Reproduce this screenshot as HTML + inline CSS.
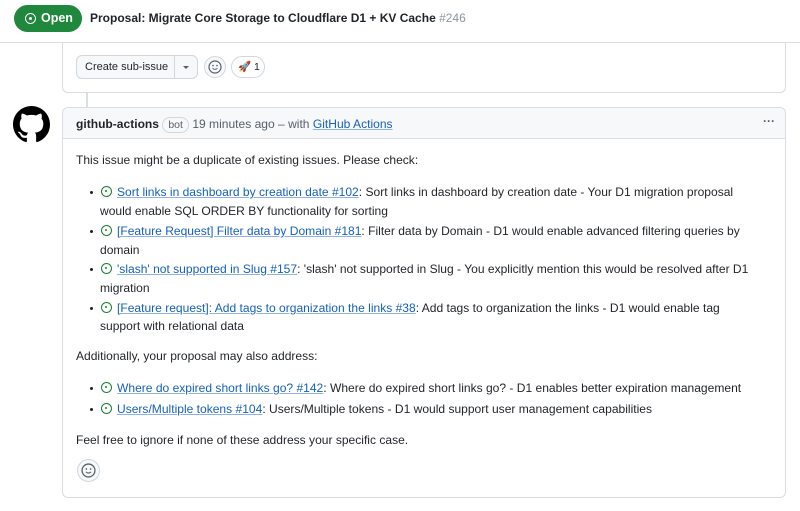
<!DOCTYPE html>
<html><head><meta charset="utf-8"><style>
*{margin:0;padding:0;box-sizing:border-box}
body{width:800px;height:511px;background:#fff;font-family:"Liberation Sans",sans-serif;color:#1f2328;position:relative;overflow:hidden;font-size:12.05px}
.a{position:absolute;white-space:nowrap}
a{color:#1760b8;text-decoration:underline;text-decoration-color:#8cb4e6}
.ic{display:inline-block;width:11px;height:11px;border:1.3px solid #1a7f37;border-radius:50%;position:relative;vertical-align:-1px;margin-right:5px}
.ic:after{content:"";position:absolute;left:2.9px;top:2.9px;width:2.6px;height:2.6px;background:#1a7f37;border-radius:50%}
.b{position:absolute;left:90px;width:3px;height:3px;background:#1f2328;border-radius:50%}
</style></head><body>
<div class="a" style="left:0;top:0;width:800px;height:43px;border-bottom:1px solid #d8dee4"></div>
<div class="a" style="left:14px;top:5px;width:68px;height:27px;background:#1f883d;border-radius:14px;color:#fff;font-weight:bold;font-size:12.5px;line-height:27px;padding-left:27px">Open</div>
<div class="a" style="left:25px;top:13px;width:11px;height:11px;border:1.3px solid #fff;border-radius:50%"></div>
<div class="a" style="left:29px;top:17px;width:3px;height:3px;background:#fff;border-radius:50%"></div>
<div class="a" style="left:90px;top:10px;font-size:12px;font-weight:bold;line-height:16px">Proposal: Migrate Core Storage to Cloudflare D1 + KV Cache <span style="color:#8c959f;font-weight:normal">#246</span></div>

<div class="a" style="left:62px;top:42px;width:724px;height:51px;border:1px solid #d8dee4;border-top:none;border-radius:0 0 6px 6px"></div>
<div class="a" style="left:76px;top:55px;width:122px;height:24px;border:1px solid #d0d7de;border-radius:6px;background:#f6f8fa;font-size:11px;line-height:22px;padding-left:8px">Create sub-issue</div>
<div class="a" style="left:174px;top:55px;width:1px;height:24px;background:#d0d7de"></div>
<div class="a" style="left:183px;top:66px;border-left:3px solid transparent;border-right:3px solid transparent;border-top:3px solid #57606a"></div>
<div class="a" style="left:204px;top:56px;width:22px;height:22px;border:1px solid #d0d7de;border-radius:50%;background:#f6f8fa"></div>
<svg class="a" style="left:208px;top:60px" width="14" height="14" viewBox="0 0 14 14"><circle cx="7" cy="7" r="6" fill="none" stroke="#57606a" stroke-width="1.2"/><circle cx="5" cy="5.6" r=".8" fill="#57606a"/><circle cx="9" cy="5.6" r=".8" fill="#57606a"/><path d="M4.5 8.3q2.5 2.2 5 0" fill="none" stroke="#57606a" stroke-width="1"/></svg>
<div class="a" style="left:231px;top:56px;width:34px;height:22px;border:1px solid #d0d7de;border-radius:11px;font-size:10.5px;line-height:20px;padding-left:6px">🚀 1</div>
<div class="a" style="left:86px;top:93px;width:2px;height:14px;background:#d8dee4"></div>

<svg class="a" style="left:13px;top:106px" width="37" height="37" viewBox="0 0 16 16"><path fill="#000" d="M8 0C3.58 0 0 3.58 0 8c0 3.54 2.29 6.53 5.47 7.59.4.07.55-.17.55-.38 0-.19-.01-.82-.01-1.49-2.01.37-2.53-.49-2.69-.94-.09-.23-.48-.94-.82-1.13-.28-.15-.68-.52-.01-.53.63-.01 1.08.58 1.23.82.72 1.21 1.87.87 2.33.66.07-.52.28-.87.51-1.07-1.78-.2-3.64-.89-3.64-3.95 0-.87.31-1.59.82-2.15-.08-.2-.36-1.02.08-2.12 0 0 .67-.21 2.2.82.64-.18 1.32-.27 2-.27.68 0 1.36.09 2 .27 1.53-1.04 2.2-.82 2.2-.82.44 1.1.16 1.92.08 2.12.51.56.82 1.27.82 2.15 0 3.07-1.87 3.75-3.65 3.95.29.25.54.73.54 1.48 0 1.07-.01 1.93-.01 2.2 0 .21.15.46.55.38A8.013 8.013 0 0016 8c0-4.42-3.58-8-8-8z"/></svg>

<div class="a" style="left:62px;top:107px;width:724px;height:391px;border:1px solid #d8dee4;border-radius:6px"></div>
<div class="a" style="left:63px;top:108px;width:722px;height:31px;background:#f6f8fa;border-bottom:1px solid #d8dee4;border-radius:6px 6px 0 0"></div>
<div class="a" style="left:76px;top:116px;line-height:16px"><b>github-actions</b> <span style="display:inline-block;border:1px solid #d0d7de;border-radius:9px;padding:0 5px;font-size:10.5px;color:#57606a;line-height:14px">bot</span> <span style="color:#57606a">19 minutes ago – with </span><a>GitHub Actions</a></div>
<div class="a" style="left:763px;top:114px;font-weight:bold;color:#57606a">···</div>

<div class="a" style="left:76px;top:153px;line-height:15px">This issue might be a duplicate of existing issues. Please check:</div>
<div class="b" style="top:191px"></div>
<div class="a" style="left:101px;top:185px;line-height:15px"><span class="ic"></span><a>Sort links in dashboard by creation date #102</a>: Sort links in dashboard by creation date - Your D1 migration proposal</div>
<div class="a" style="left:100px;top:204px;line-height:15px">would enable SQL ORDER BY functionality for sorting</div>
<div class="b" style="top:230px"></div>
<div class="a" style="left:101px;top:224px;line-height:15px"><span class="ic"></span><a>[Feature Request] Filter data by Domain #181</a>: Filter data by Domain - D1 would enable advanced filtering queries by</div>
<div class="a" style="left:100px;top:243px;line-height:15px">domain</div>
<div class="b" style="top:268px"></div>
<div class="a" style="left:101px;top:262px;line-height:15px"><span class="ic"></span><a>'slash' not supported in Slug #157</a>: 'slash' not supported in Slug - You explicitly mention this would be resolved after D1</div>
<div class="a" style="left:100px;top:281px;line-height:15px">migration</div>
<div class="b" style="top:307px"></div>
<div class="a" style="left:101px;top:301px;line-height:15px"><span class="ic"></span><a>[Feature request]: Add tags to organization the links #38</a>: Add tags to organization the links - D1 would enable tag</div>
<div class="a" style="left:100px;top:319px;line-height:15px">support with relational data</div>
<div class="a" style="left:76px;top:349px;line-height:15px">Additionally, your proposal may also address:</div>
<div class="b" style="top:387px"></div>
<div class="a" style="left:101px;top:381px;line-height:15px"><span class="ic"></span><a>Where do expired short links go? #142</a>: Where do expired short links go? - D1 enables better expiration management</div>
<div class="b" style="top:408px"></div>
<div class="a" style="left:101px;top:402px;line-height:15px"><span class="ic"></span><a>Users/Multiple tokens #104</a>: Users/Multiple tokens - D1 would support user management capabilities</div>
<div class="a" style="left:76px;top:433px;line-height:15px">Feel free to ignore if none of these address your specific case.</div>
<div class="a" style="left:77px;top:459px;width:23px;height:23px;border:1px solid #d0d7de;border-radius:50%;background:#f6f8fa"></div>
<svg class="a" style="left:81px;top:463px" width="15" height="15" viewBox="0 0 14 14"><circle cx="7" cy="7" r="6" fill="none" stroke="#57606a" stroke-width="1.2"/><circle cx="5" cy="5.6" r=".8" fill="#57606a"/><circle cx="9" cy="5.6" r=".8" fill="#57606a"/><path d="M4.5 8.3q2.5 2.2 5 0" fill="none" stroke="#57606a" stroke-width="1"/></svg>
</body></html>
